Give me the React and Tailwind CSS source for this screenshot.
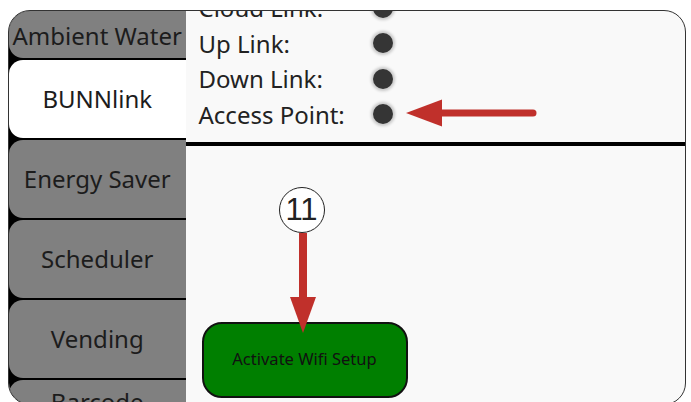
const tabs = ["Energy Saver", "Scheduler", "Vending"];
const rows = ["Cloud Link:", "Up Link:", "Down Link:", "Access Point:"];

function StatusDot() {
  return (
    <span className="block w-[20px] h-[20px] rounded-full bg-[#353535] shadow-[0_0_3px_2px_rgba(0,0,0,0.2)]" />
  );
}

export default function App() {
  return (
    <div className="w-[691px] h-[402px] overflow-hidden bg-white pt-[10px] pl-[8px] font-['Noto_Sans',sans-serif]">
      <div className="w-[678px] h-[395px] rounded-[22px] border-[1.5px] border-[#333] overflow-hidden flex bg-[#f9f9f9]">
        {/* side tabs */}
        <div className="w-[176.5px] shrink-0 bg-black overflow-hidden flex flex-col gap-[2px] text-[24px] text-[#1c1c1c]">
          <div className="h-[46.5px] shrink-0 rounded-l-[14px] bg-[#808080] flex items-center justify-center pt-[4px] whitespace-nowrap overflow-hidden">
            Ambient Water
          </div>
          <div className="h-[78px] shrink-0 rounded-l-[14px] bg-white flex items-center justify-center">
            BUNNlink
          </div>
          {tabs.map((t) => (
            <div
              key={t}
              className="h-[78px] shrink-0 rounded-l-[14px] bg-[#808080] flex items-center justify-center whitespace-nowrap"
            >
              {t}
            </div>
          ))}
          <div className="h-[78px] shrink-0 rounded-l-[14px] bg-[#808080] flex justify-center pt-[4px]">
            Barcode
          </div>
        </div>

        {/* main panel */}
        <div className="flex-1 flex flex-col">
          <div className="relative h-[130.5px] overflow-hidden pl-[13px]">
            <div className="-mt-[21px] flex flex-col">
              {rows.map((r) => (
                <div key={r} className="h-[35.5px] flex items-center">
                  <span className="w-[174px] text-[24px] leading-[35px] text-[#222]">{r}</span>
                  <StatusDot />
                </div>
              ))}
            </div>
            <svg className="absolute left-[218px] top-[86.5px]" width="134" height="30" viewBox="0 0 134 30">
              <line x1="36" y1="15" x2="129" y2="15" stroke="#c0302b" strokeWidth="7" strokeLinecap="round" />
              <polygon points="2,15 38,1.5 38,28.5" fill="#c0302b" />
            </svg>
          </div>
          <div className="h-[4px] bg-black" />

          <div className="relative flex-1 pt-[176px] pl-[16px]">
            <button className="w-[206px] h-[76px] rounded-[20px] border-2 border-[#111] bg-[#007f00] text-[16.5px] text-[#111]">
              Activate Wifi Setup
            </button>
            <div className="absolute left-[93px] top-[41px] w-[46px] h-[46px] rounded-full border border-[#222] bg-white flex items-center justify-center font-['Liberation_Sans',sans-serif] text-[31px] leading-none text-[#222]">
              11
            </div>
            <svg className="absolute left-[103px] top-[87px]" width="28" height="100" viewBox="0 0 28 100">
              <rect x="10" y="0" width="8" height="66" fill="#c0302b" />
              <polygon points="1,64 27,64 14,100" fill="#c0302b" />
            </svg>
          </div>
        </div>
      </div>
    </div>
  );
}
